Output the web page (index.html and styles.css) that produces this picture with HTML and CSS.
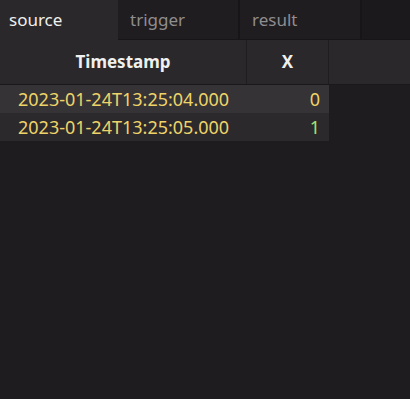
FILE: index.html
```html
<!DOCTYPE html>
<html>
<head>
	<meta name="viewport" content="width=device-width, initial-scale=1" />
	<title>Table</title>
	<link rel="stylesheet" href="styles.css">
</head>
<body>
	<div class="tabs">
		<div class="tab active">source</div>
		<div class="tab">trigger</div>
		<div class="tab">result</div>
		<div class="tab-rest"></div>
	</div>
	<div class="grid">
		<div class="head">
			<div class="hc ts">Timestamp</div>
			<div class="hc x">X</div>
			<div class="hc fill"></div>
		</div>
		<div class="row odd">
			<div class="c ts">2023-01-24T13:25:04.000</div>
			<div class="c x">0</div>
		</div>
		<div class="row">
			<div class="c ts">2023-01-24T13:25:05.000</div>
			<div class="c x green">1</div>
		</div>
	</div>
</body>
</html>
```
FILE: styles.css
```css
body {
	margin:0;
	background-color:#1e1c1e;
	font-family:"Noto Sans", sans-serif;
	color:#f0f0ee;
}

.tabs {
	display:flex;
	height:40px;
	background-color:#1b191b;
}

.tab {
	width:118px;
	padding-left:9px;
	box-sizing:border-box;
	line-height:39px;
	font-size:17px;
	color:#8f8d8f;
	background-color:#1f1d1f;
	border-right:2px solid #171517;
	border-bottom:1px solid #171517;
}

.tab + .tab {
	width:122px;
	padding-left:12px;
}

.tab.active {
	color:#f0f0ee;
	background-color:#2a282a;
	border-bottom-color:#2a282a;
	border-right:0;
}

.tab-rest {
	flex:1;
	border-bottom:1px solid #171517;
}

.head {
	display:flex;
	height:44px;
	background-color:#2a282a;
	border-bottom:1px solid #1a181a;
}

.hc {
	font-weight:bold;
	font-size:17px;
	line-height:44px;
	text-align:center;
	border-right:1px solid #1f1d1f;
}

.ts {
	width:247px;
	box-sizing:border-box;
}

.x {
	width:82px;
	box-sizing:border-box;
}

.fill {
	flex:1;
	border-right:0;
}

.row {
	display:flex;
	height:28px;
	width:329px;
	background-color:#2b292b;
	color:#eed369;
	font-size:18px;
	line-height:28px;
}

.row.odd {
	background-color:#353335;
}

.c.ts {
	padding-left:18px;
}

.c.x {
	text-align:right;
	padding-right:9px;
}

.green {
	color:#a2e276;
}
```
